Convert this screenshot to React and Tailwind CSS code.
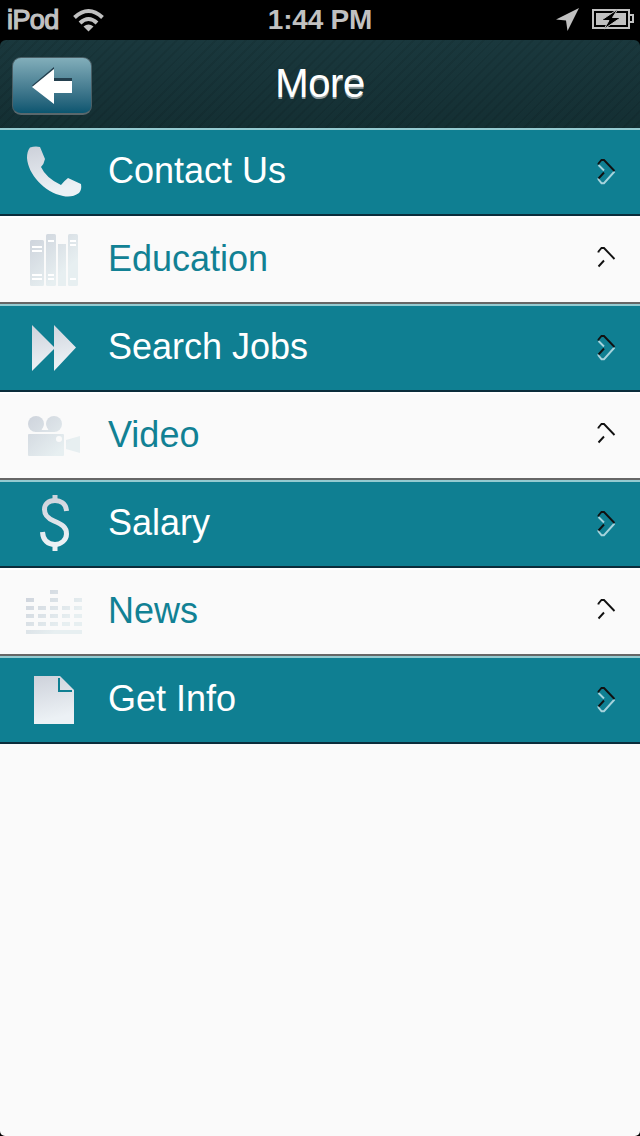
import React from 'react';

const Gradient = ({ id }) => (
    <defs>
        <linearGradient id={id} x1="16" y1="10" x2="28" y2="66" gradientUnits="userSpaceOnUse">
            <stop offset="0" stopColor="#c6cad4" />
            <stop offset="1" stopColor="#ecf1f5" />
        </linearGradient>
        <linearGradient id={`${id}-light`} x1="24" y1="10" x2="64" y2="54" gradientUnits="userSpaceOnUse">
            <stop offset="0" stopColor="#c8cdd7" />
            <stop offset="1" stopColor="#e7eff1" />
        </linearGradient>
    </defs>
);

const PhoneIcon = () => (
    <path d="M30 17.500 Q35 16 40 17 L45 29 Q44 34 41 37 Q46 48 61 55 Q64 51 68 48 L81 54 Q82 60 79 63 Q72 68 63 66 C44 62 28 44 27 28 Q27 21 30 17.500Z" />
);

const BooksIcon = () => (
    <>
        <rect x="30" y="22" width="14" height="46" rx="1.500" />
        <rect x="46" y="16" width="10" height="52" rx="1.500" />
        <rect x="58" y="26" width="8" height="42" />
        <rect x="68" y="16" width="10" height="52" rx="1.500" />
        <path
            fill="#fff"
            d="M32 28h10v2h-10zM32 32h10v2h-10zM32 56h10v2h-10zM32 60h10v2h-10zM48 22h6v2h-6zM48 56h6v2h-6zM48 60h6v2h-6zM70 22h6v2h-6zM70 26h6v2h-6zM70 60h6v2h-6z"
        />
    </>
);

const ForwardIcon = () => <path d="M32 19 L54 41 V19 L76 41.500 L54 65 V43 L32 65Z" />;

const CameraIcon = () => (
    <>
        <circle cx="36" cy="30" r="8" />
        <circle cx="54" cy="30" r="8" />
        <path d="M35 36h20v2h-20z" />
        <path fill="#fafafa" d="M44 32 L42 36 H48 L46 32Z" />
        <rect x="28" y="40" width="36" height="22" rx="1" />
        <circle cx="59" cy="45" r="3" fill="#fafafa" />
        <path d="M66 46 L80 42 V59 L66 55Z" />
    </>
);

const DollarIcon = () => (
    <>
        <path
            fill="none"
            stroke="url(#salary)"
            strokeWidth="5"
            d="M66.500 29 C66 21 60 18.500 55 18.500 C48 18.500 44.500 22.500 44.500 27.500 C44.500 33 47 36 54 39 C62 42.500 66.500 45 66.500 52 C66.500 58 61 62.500 55 62.500 C48 62.500 43 58.500 42.500 50"
        />
        <path d="M52.500 13h5v7h-5zM52.500 62h5v7h-5z" />
    </>
);

const BarsIcon = () => (
    <path d="M26 28h8v4h-8zM50 20h8v4h-8zM50 28h8v4h-8zM74 28h8v4h-8zM26 36h8v4h-8zM38 36h8v4h-8zM50 36h8v4h-8zM62 36h8v4h-8zM74 36h8v4h-8zM26 44h8v4h-8zM38 44h8v4h-8zM50 44h8v4h-8zM62 44h8v4h-8zM74 44h8v4h-8zM26 52h8v4h-8zM38 52h8v4h-8zM50 52h8v4h-8zM62 52h8v4h-8zM74 52h8v4h-8zM26 60h56v4h-56z" />
);

const FileIcon = () => (
    <>
        <path d="M34 18 H60 L74 32 V66 H34Z" />
        <path fill="none" stroke="#0f7f92" strokeWidth="2" d="M59 20 V33 H72" />
    </>
);

const items = [
    { id: 'contact', label: 'Contact Us', Icon: PhoneIcon },
    { id: 'education', label: 'Education', Icon: BooksIcon },
    { id: 'search', label: 'Search Jobs', Icon: ForwardIcon },
    { id: 'video', label: 'Video', Icon: CameraIcon },
    { id: 'salary', label: 'Salary', Icon: DollarIcon },
    { id: 'news', label: 'News', Icon: BarsIcon },
    { id: 'info', label: 'Get Info', Icon: FileIcon },
];

const Chevron = ({ light }) => (
    <svg width="20" height="28" viewBox="0 0 20 28" fill="none" strokeWidth="1.900">
        {light && (
            <path stroke="#a5d3dc" d="M2.500 7 L8 12.500 M2.500 20 V21.500 L5.500 25.200 H8 L18.500 13.500" />
        )}
        <path stroke="#111" d="M2.500 6.500 V5.500 L5.500 2 H8 L18.500 13 M8 14.500 L2.500 20.500" />
    </svg>
);

const Row = ({ item, dark }) => {
    const { id, label, Icon } = item;
    return (
        <li
            className={`flex h-[88px] items-center border-y-2 pr-6 ${
                dark
                    ? 'border-t-[#94cbd1] border-b-[#0b2d3b] bg-[#0f7f92] text-white'
                    : 'border-t-white border-b-[#666] bg-[#fafafa] text-[#118194]'
            }`}
        >
            <svg width="108" height="84" viewBox="0 0 108 84" fill={dark ? `url(#${id})` : `url(#${id}-light)`}>
                <Gradient id={id} />
                <Icon />
            </svg>
            <span className="flex-1 pb-0.5 text-[36px] leading-none">{label}</span>
            <Chevron light={dark} />
        </li>
    );
};

const StatusBar = () => (
    <div className="grid h-10 grid-cols-3 items-center bg-black text-[#c1c1c1]">
        <div className="flex items-center pl-[7px]">
            <span className="w-[66px] text-[27px] leading-none tracking-[-0.6px] [-webkit-text-stroke:1.2px_#c1c1c1]">iPod</span>
            <svg width="31" height="24" viewBox="0 0 31 24" fill="none" stroke="currentColor" strokeWidth="4">
                <path d="M1.500 9.500 Q15.500 -3.500 29.500 9.500" />
                <path d="M7 15 Q15.500 7 24 15" />
                <path fill="currentColor" stroke="none" d="M10.500 18.500 Q15.500 14.500 20.500 18.500 L15.500 23.500Z" />
            </svg>
        </div>
        <span className="text-center text-[28px] leading-none font-bold tracking-[-0.2px]">1:44 PM</span>
        <div className="flex items-center justify-end gap-3 pr-[5px]">
            <svg width="24" height="24" viewBox="0 0 24 24" fill="currentColor">
                <path d="M23 0 L11.500 23 L10 12.500 L0 11.500Z" />
            </svg>
            <svg width="43" height="22" viewBox="0 0 43 22">
                <rect x="1" y="1" width="36" height="18" fill="none" stroke="currentColor" strokeWidth="2" />
                <rect x="4" y="4" width="30" height="12" fill="currentColor" />
                <path d="M38 6h3v7h-3" fill="none" stroke="currentColor" strokeWidth="2" />
                <path d="M26 0 L9 11.500 H17 L12 20 L29 8.500 H20.500Z" fill="#000" stroke="#c1c1c1" strokeWidth="1" />
            </svg>
        </div>
    </div>
);

const Header = () => (
    <header className="grid h-[88px] grid-cols-[1fr_auto_1fr] items-center rounded-t-[6px] bg-[repeating-linear-gradient(135deg,transparent_0_5px,rgba(0,0,0,0.08)_5px_7px),linear-gradient(#1a383d,#142f33)] px-3">
        <button className="mt-1 flex h-[58px] w-20 items-center justify-center rounded-[9px] border border-[#4a5f66] border-b-2 border-b-[#59676c] bg-linear-to-b from-[#82aeba] to-[#095670]">
            <svg width="44" height="40" viewBox="0 0 44 40">
                <path d="M2 19.500 L24 1 V12 H42 V25 H24 V36Z" fill="#24404f" />
                <path d="M2 21 L24 3 V15 H42 V27 H24 V38Z" fill="#fff" />
            </svg>
        </button>
        <h1 className="pb-0.5 text-[40px] leading-none tracking-[-0.4px] text-white [text-shadow:0_2px_0_#8c999c]">More</h1>
    </header>
);

const App = () => (
    <div className="bg-black font-['Liberation_Sans',Arial,sans-serif]">
        <StatusBar />
        <Header />
        <ul className="min-h-[1008px] rounded-b-[5px] bg-[#fafafa]">
            {items.map((item, i) => (
                <Row key={item.id} item={item} dark={i % 2 === 0} />
            ))}
        </ul>
    </div>
);

export default App;
